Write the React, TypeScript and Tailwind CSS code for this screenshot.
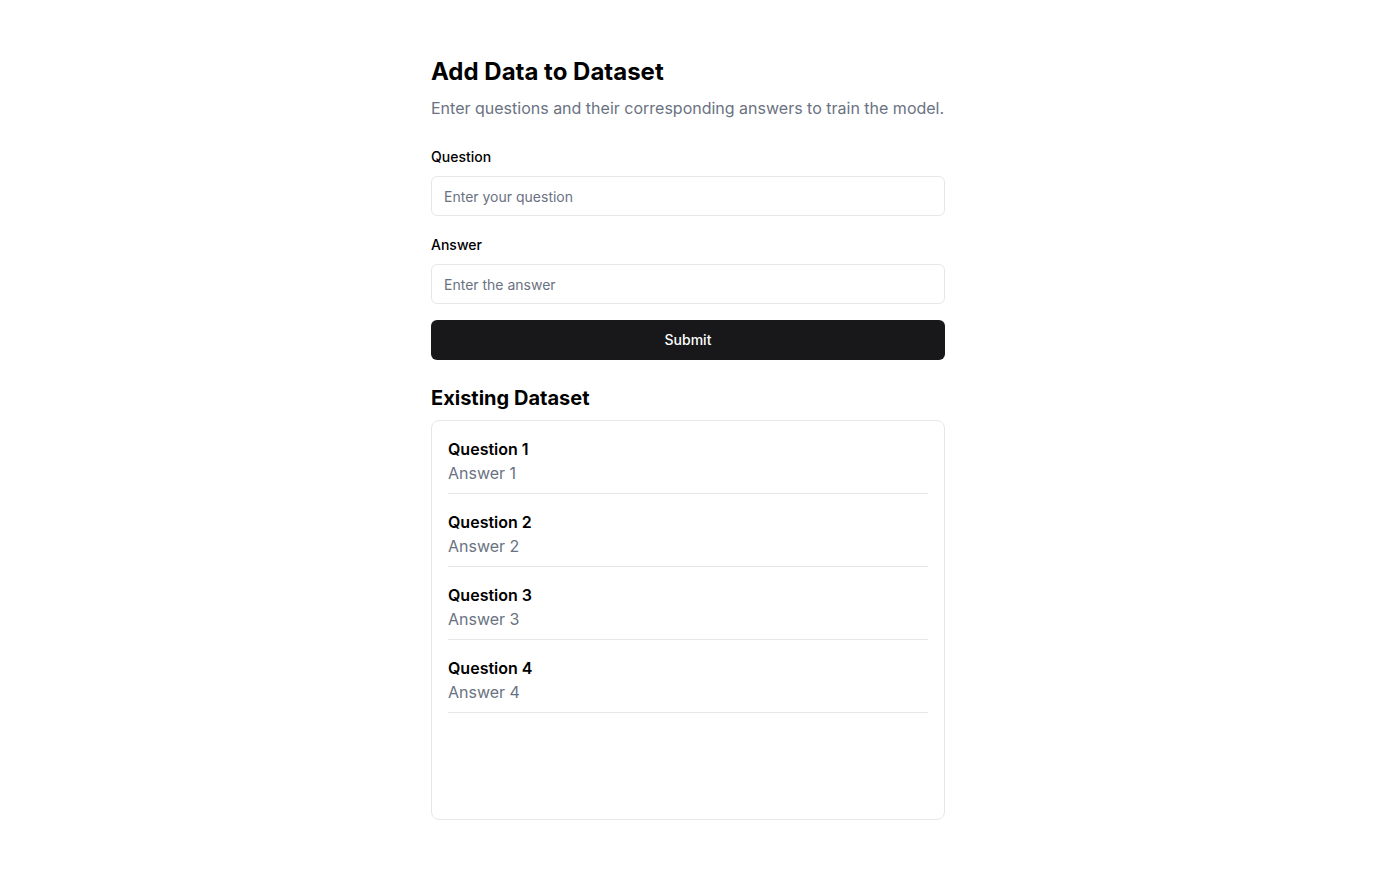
import React from "react";

const items = [1, 2, 3, 4];

export default function App() {
  return (
    <div className="min-h-screen bg-white" style={{ fontFamily: "Inter, 'Noto Sans', sans-serif" }}>
      <div className="mx-auto w-[514px] pt-14">
        <h1 className="text-2xl leading-8 font-bold text-black">Add Data to Dataset</h1>
        <p className="mt-2 text-base leading-6 text-gray-500">
          Enter questions and their corresponding answers to train the model.
        </p>
        <label className="mt-[27px] block text-sm leading-5 font-medium text-black">Question</label>
        <input
          className="mt-[9px] block h-10 w-full rounded-md border border-gray-200 px-3 text-sm text-black placeholder:text-gray-500 outline-none"
          placeholder="Enter your question"
        />
        <label className="mt-[19px] block text-sm leading-5 font-medium text-black">Answer</label>
        <input
          className="mt-[9px] block h-10 w-full rounded-md border border-gray-200 px-3 text-sm text-black placeholder:text-gray-500 outline-none"
          placeholder="Enter the answer"
        />
        <button className="mt-4 flex h-10 w-full items-center justify-center rounded-md bg-[#18181b] text-sm font-medium text-white">
          Submit
        </button>
        <h2 className="mt-6 text-xl leading-7 font-bold text-black">Existing Dataset</h2>
        <div className="mt-2 h-[400px] rounded-lg border border-gray-200 p-4">
          <div className="flex flex-col gap-4">
            {items.map((n) => (
              <div key={n} className="border-b border-gray-200 pb-2">
                <div className="text-base leading-6 font-semibold text-black">Question {n}</div>
                <div className="text-base leading-6 text-gray-500">Answer {n}</div>
              </div>
            ))}
          </div>
        </div>
      </div>
    </div>
  );
}
